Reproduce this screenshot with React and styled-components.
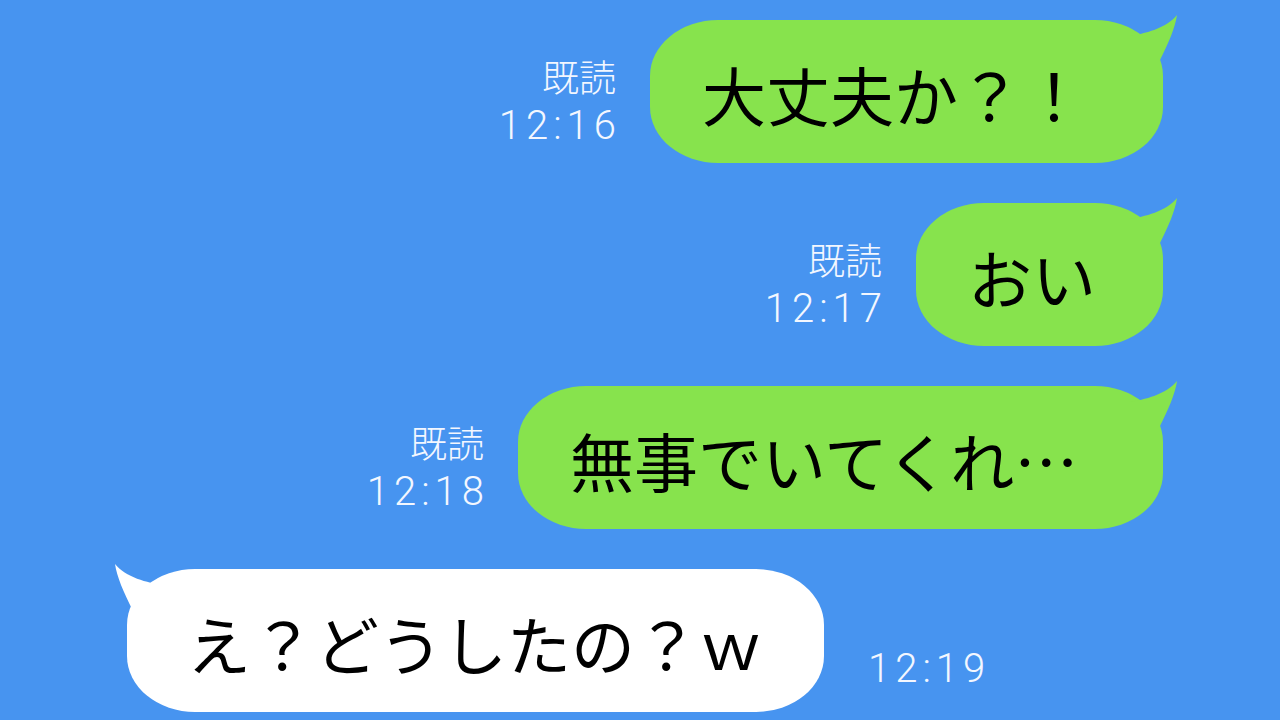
import React from 'react'
import styled, { createGlobalStyle } from 'styled-components'

const GlobalStyle = createGlobalStyle`
  html, body {
    margin: 0;
    padding: 0;
    height: 100%;
    background: #4794f0;
    overflow: hidden;
  }
  #root {
    height: 100%;
  }
`

const Chat = styled.div`
  box-sizing: border-box;
  height: 720px;
  width: 1280px;
  padding: 20px 117px 0 127px;
  display: flex;
  flex-direction: column;
  gap: 40px;
  background: #4794f0;
  font-family: "Noto Sans CJK JP", "Noto Sans", sans-serif;
`

const Row = styled.div`
  display: flex;
  align-items: flex-end;
  justify-content: ${p => (p.mine ? 'flex-end' : 'flex-start')};
  gap: ${p => (p.mine ? '34px' : '44px')};
`

const Meta = styled.div`
  display: flex;
  flex-direction: column;
  align-items: flex-end;
  color: #f3f7ff;
  margin-bottom: ${p => (p.mine ? '12px' : '18px')};
`

const Read = styled.span`
  font-family: "Noto Sans CJK JP", sans-serif;
  font-weight: 300;
  font-size: 37px;
  line-height: 50px;
`

const Time = styled.span`
  font-family: Roboto, "Liberation Sans", sans-serif;
  font-weight: 300;
  font-size: 40px;
  line-height: 50px;
  letter-spacing: 5px;
  margin-right: -5px;
`

const Bubble = styled.div`
  position: relative;
  box-sizing: border-box;
  width: ${p => p.w}px;
  height: 143px;
  display: flex;
  align-items: center;
  padding: 2px 0 0 ${p => (p.mine ? '52px' : '60px')};
  border-radius: 68px / 56px;
  background: ${p => (p.mine ? '#87e34d' : '#ffffff')};
  color: #000;
  font-size: 64px;
  line-height: 1;
  white-space: nowrap;
`

const Tail = styled.svg`
  position: absolute;
  top: -6px;
  ${p => (p.mine ? 'right: -16px;' : 'left: -14px; transform: scaleX(-1);')}
  width: 50px;
  height: 50px;
`

const BubbleTail = ({ mine }) => (
  <Tail mine={mine} viewBox="0 0 50 50">
    <path
      d="M0 22 C15 20 38 14 48 1 C46 14 40 28 30 48 L0 48 Z"
      fill={mine ? '#87e34d' : '#ffffff'}
    />
  </Tail>
)

const messages = [
  { mine: true, text: '大丈夫か？！', time: '12:16', w: 513 },
  { mine: true, text: 'おい', time: '12:17', w: 247 },
  { mine: true, text: '無事でいてくれ…', time: '12:18', w: 645 },
  { mine: false, text: 'え？どうしたの？ｗ', time: '12:19', w: 697 },
]

export default function App() {
  return (
    <>
      <GlobalStyle />
      <Chat>
        {messages.map((m, i) => (
          <Row key={i} mine={m.mine}>
            {m.mine && (
              <Meta mine>
                <Read>既読</Read>
                <Time>{m.time}</Time>
              </Meta>
            )}
            <Bubble mine={m.mine} w={m.w}>
              <BubbleTail mine={m.mine} />
              {m.text}
            </Bubble>
            {!m.mine && (
              <Meta>
                <Time>{m.time}</Time>
              </Meta>
            )}
          </Row>
        ))}
      </Chat>
    </>
  )
}
